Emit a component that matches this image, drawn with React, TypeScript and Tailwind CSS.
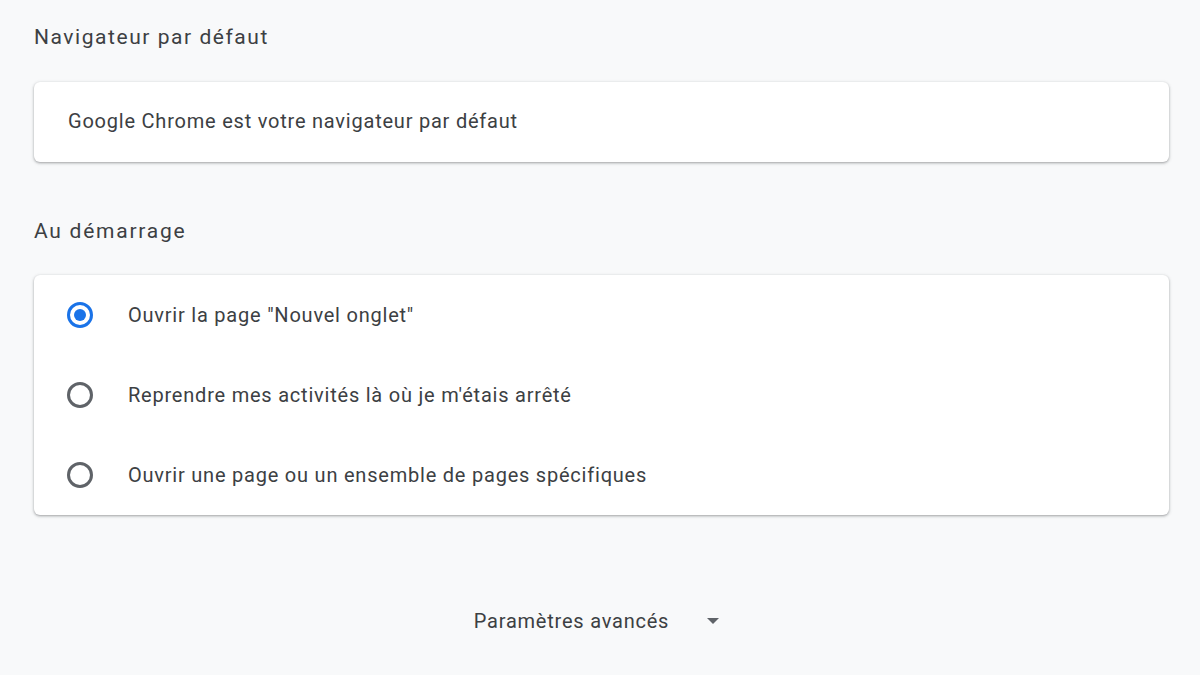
import { useState } from "react";

const options = [
  'Ouvrir la page "Nouvel onglet"',
  "Reprendre mes activités là où je m'étais arrêté",
  "Ouvrir une page ou un ensemble de pages spécifiques",
];

function Radio({ checked }: { checked: boolean }) {
  return (
    <span
      className={`flex h-[26px] w-[26px] shrink-0 items-center justify-center rounded-full border-[3px] ${
        checked ? "border-[#1a73e8]" : "border-[#5f6368]"
      }`}
    >
      {checked && <span className="h-[12px] w-[12px] rounded-full bg-[#1a73e8]" />}
    </span>
  );
}

export default function App() {
  const [selected, setSelected] = useState(0);

  return (
    <div
      className="min-h-[675px] w-[1200px] bg-[#f8f9fa] px-[34px] text-[#202124]"
      style={{ fontFamily: "Roboto, 'Liberation Sans', sans-serif" }}
    >
      <h2 className="pt-[24px] text-[21px] leading-[26px] tracking-[1.55px] text-[#3c4043]">
        Navigateur par défaut
      </h2>

      <div className="mt-[32px] flex h-[80px] w-[1135px] items-center rounded-[6px] bg-white px-[34px] shadow-[0_1px_2px_rgba(60,64,67,0.3),0_1px_3px_1px_rgba(60,64,67,0.15)]">
        <span className="-mt-[2px] text-[20px] tracking-[0.78px] text-[#3c4043]">
          Google Chrome est votre navigateur par défaut
        </span>
      </div>

      <h2 className="mt-[56px] text-[21px] leading-[26px] tracking-[1.75px] text-[#3c4043]">Au démarrage</h2>

      <div className="mt-[31px] w-[1135px] rounded-[6px] bg-white shadow-[0_1px_2px_rgba(60,64,67,0.3),0_1px_3px_1px_rgba(60,64,67,0.15)]">
        {options.map((label, i) => (
          <button
            key={label}
            type="button"
            onClick={() => setSelected(i)}
            className="flex h-[80px] w-full items-center pl-[33px] text-left"
          >
            <Radio checked={selected === i} />
            <span className="ml-[35px] text-[20px] tracking-[0.78px] text-[#3c4043]">{label}</span>
          </button>
        ))}
      </div>

      <div className="mt-[91px] flex items-center justify-center pr-[6px]">
        <span className="text-[20px] tracking-[0.78px] text-[#3c4043]">Paramètres avancés</span>
        <svg className="ml-[37px] h-[10px] w-[14px]" viewBox="0 0 14 10">
          <path d="M1 2 L13 2 L7 8 Z" fill="#5f6368" />
        </svg>
      </div>
    </div>
  );
}
